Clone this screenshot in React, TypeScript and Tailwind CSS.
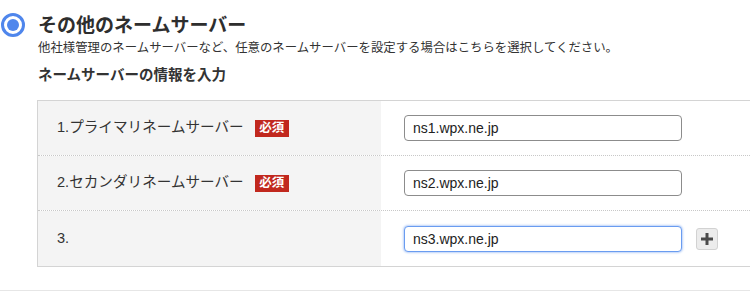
import React from "react";

const FONT = '"Liberation Sans", "Noto Sans CJK JP", sans-serif';

function Badge() {
  return (
    <span className="ml-[11px] inline-flex h-[17px] w-[34px] items-center justify-center bg-[#c1281e] text-[12.5px] font-bold leading-none text-white">
      必須
    </span>
  );
}

function Row({
  label,
  required,
  value,
  focused,
  last,
}: {
  label: string;
  required?: boolean;
  value: string;
  focused?: boolean;
  last?: boolean;
}) {
  return (
    <div className={`flex h-[55px] ${last ? "" : "border-b border-dotted border-[#c8c8c8]"}`}>
      <div className="flex w-[343px] items-center bg-[#f4f4f4] pl-[19px] text-[14.6px] text-[#333]">
        <span>{label}</span>
        {required && <Badge />}
      </div>
      <div className="flex flex-1 items-center bg-white pl-[23px]">
        <input
          readOnly
          value={value}
          className={`h-[26px] w-[278px] rounded-[4px] border bg-white px-[8px] text-[14px] text-[#222] outline-none ${
            focused
              ? "border-[#6a9cf0] shadow-[0_0_2px_1px_rgba(106,156,240,0.45)]"
              : "border-[#8c8c8c]"
          }`}
          style={{ fontFamily: FONT }}
        />
        {focused && (
          <button className="ml-[14px] flex h-[22px] w-[22px] items-center justify-center rounded-[3px] border border-[#d2d2d2] bg-[#ececec]">
            <svg width="12" height="12" viewBox="0 0 12 12">
              <rect x="4.5" y="0" width="3" height="12" fill="#4a4a4a" />
              <rect x="0" y="4.5" width="12" height="3" fill="#4a4a4a" />
            </svg>
          </button>
        )}
      </div>
    </div>
  );
}

export default function App() {
  return (
    <div
      className="relative h-[291px] w-[750px] overflow-hidden bg-white text-[#333]"
      style={{ fontFamily: FONT }}
    >
      <div className="flex">
        <div className="w-[38px] pl-[1px] pt-[13px]">
          <div className="flex h-[24px] w-[24px] items-center justify-center rounded-full border-[3px] border-[#4f86ec] bg-white">
            <div className="h-[12px] w-[12px] rounded-full bg-[#4f86ec]" />
          </div>
        </div>
        <div className="flex-1">
          <h1 className="mt-[15px] text-[19px] font-bold leading-[22px] text-[#2e2e2e]">
            その他のネームサーバー
          </h1>
          <p className="mt-[2px] text-[12.4px] leading-[18px] text-[#333]">
            他社様管理のネームサーバーなど、任意のネームサーバーを設定する場合はこちらを選択してください。
          </p>
          <h2 className="mt-[8px] text-[14.5px] font-bold leading-[20px] text-[#333]">
            ネームサーバーの情報を入力
          </h2>
        </div>
      </div>
      <div className="ml-[37px] mt-[15px] border-y border-l border-[#d4d4d4]">
        <Row label="1.プライマリネームサーバー" required value="ns1.wpx.ne.jp" />
        <Row label="2.セカンダリネームサーバー" required value="ns2.wpx.ne.jp" />
        <Row label="3." value="ns3.wpx.ne.jp" focused last />
      </div>
      <div className="mt-[23px] h-px w-full bg-[#e6e6e6]" />
    </div>
  );
}
